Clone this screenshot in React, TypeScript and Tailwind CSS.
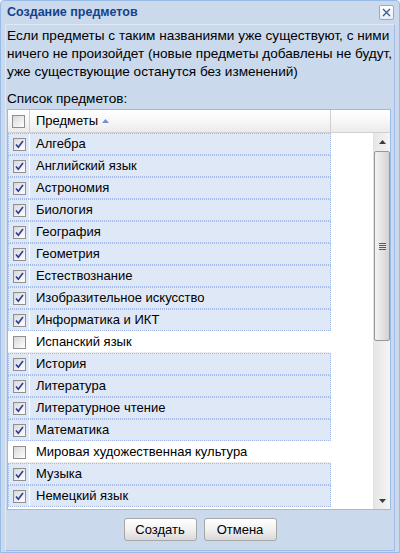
import React from "react"

const subjects: { name: string; checked: boolean }[] = [
  { name: "Алгебра", checked: true },
  { name: "Английский язык", checked: true },
  { name: "Астрономия", checked: true },
  { name: "Биология", checked: true },
  { name: "География", checked: true },
  { name: "Геометрия", checked: true },
  { name: "Естествознание", checked: true },
  { name: "Изобразительное искусство", checked: true },
  { name: "Информатика и ИКТ", checked: true },
  { name: "Испанский язык", checked: false },
  { name: "История", checked: true },
  { name: "Литература", checked: true },
  { name: "Литературное чтение", checked: true },
  { name: "Математика", checked: true },
  { name: "Мировая художественная культура", checked: false },
  { name: "Музыка", checked: true },
  { name: "Немецкий язык", checked: true },
]

const CheckBox = ({ checked }: { checked: boolean }) => (
  <div className="w-[13px] h-[13px] border border-[#8f8f8f] bg-gradient-to-br from-[#d8d8d8] to-[#ffffff] flex items-center justify-center">
    {checked && (
      <svg width="11" height="11" viewBox="0 0 11 11">
        <path d="M2 5.5 L4.3 8.2 L9 2" fill="none" stroke="#2a3c97" strokeWidth="1.6" />
      </svg>
    )}
  </div>
)

const Row = ({ name, checked }: { name: string; checked: boolean }) => (
  <div
    className={`flex h-[22px] w-[323px] ${
      checked ? "bg-[#dfe8f6] border border-dotted border-[#a3bae9]" : "bg-white border border-white border-b-[#ededed]"
    }`}
  >
    <div className="w-[21px] flex items-center justify-center border-r border-white shrink-0">
      <CheckBox checked={checked} />
    </div>
    <div className="pl-[6px] flex items-center text-[13px] text-black whitespace-nowrap">{name}</div>
  </div>
)

const ScrollBar = () => (
  <div className="w-[17px] flex flex-col bg-gradient-to-r from-[#e6e6e6] to-[#f4f4f4] border-l border-[#e2e2e2]">
    <div className="h-[17px] flex items-center justify-center">
      <svg width="7" height="4" viewBox="0 0 7 4">
        <path d="M0 4 L3.5 0 L7 4 Z" fill="#3c3c3c" />
      </svg>
    </div>
    <div className="mt-[1px] h-[190px] border border-[#979797] rounded-[2px] bg-gradient-to-r from-[#f3f3f3] via-[#e4e4e4] to-[#d2d2d2] flex items-center justify-center">
      <div className="flex flex-col gap-[1px]">
        <div className="w-[7px] h-[1px] bg-[#5b5b5b]" />
        <div className="w-[7px] h-[1px] bg-[#5b5b5b]" />
        <div className="w-[7px] h-[1px] bg-[#5b5b5b]" />
        <div className="w-[7px] h-[1px] bg-[#5b5b5b]" />
      </div>
    </div>
    <div className="flex-1" />
    <div className="h-[17px] flex items-center justify-center">
      <svg width="7" height="4" viewBox="0 0 7 4">
        <path d="M0 0 L3.5 4 L7 0 Z" fill="#3c3c3c" />
      </svg>
    </div>
  </div>
)

const Button = ({ label }: { label: string }) => (
  <button className="w-[73px] h-[23px] rounded-[3px] border border-[#a7a7a7] bg-gradient-to-b from-[#ffffff] via-[#f1f1f1] to-[#d9d9d9] text-[13px] text-black flex items-center justify-center">
    {label}
  </button>
)

export default function App() {
  return (
    <div className="w-[400px] h-[553px] bg-[#cad9ec] border border-[#99bbe8] rounded-t-[4px] flex flex-col" style={{ fontFamily: '"Liberation Sans", Arial, sans-serif' }}>
      {/* Title bar */}
      <div className="h-[23px] flex items-center justify-between pl-[6px] pr-[5px] shrink-0">
        <span className="text-[12.5px] font-bold text-[#15428b]">Создание предметов</span>
        <div className="w-[15px] h-[15px] border border-[#8daad8] rounded-[2px] bg-gradient-to-b from-white to-[#e6eefa] flex items-center justify-center">
          <svg width="9" height="9" viewBox="0 0 9 9">
            <path d="M1 1 L8 8 M8 1 L1 8" stroke="#3b5a8a" strokeWidth="1.3" />
          </svg>
        </div>
      </div>

      {/* Body */}
      <div className="mx-[4px] flex-1 border-t border-l border-[#dfe8f6] border-b border-r border-b-[#a3bae9] border-r-[#a3bae9] flex flex-col mb-[1px]">
        <p className="pl-[1px] pt-[2px] text-[13.6px] leading-[18px] text-black">
          Если предметы с таким названиями уже существуют, с ними ничего не произойдет (новые предметы добавлены не будут, уже существующие останутся без изменений)
        </p>
        <div className="mt-[8px] pl-[1px] text-[13.6px] leading-[19px] text-black">Список предметов:</div>

        {/* Grid */}
        <div className="mt-[1px] ml-[1px] w-[384px] h-[401px] border border-[#99bbe8] bg-white flex flex-col">
          <div className="h-[23px] flex border-b border-[#d0d0d0] bg-gradient-to-b from-[#ffffff] via-[#f7f7f7] to-[#ebebeb] shrink-0">
            <div className="w-[22px] border-r border-[#d0d0d0] flex items-center justify-center">
              <CheckBox checked={false} />
            </div>
            <div className="w-[301px] border-r border-[#d0d0d0] flex items-center pl-[6px] text-[13px] text-black">
              Предметы
              <svg className="ml-[4px]" width="7" height="4" viewBox="0 0 7 4">
                <path d="M0 4 L3.5 0 L7 4 Z" fill="#6f93cf" />
              </svg>
            </div>
            <div className="flex-1" />
          </div>
          <div className="flex flex-1 min-h-0">
            <div className="flex-1 flex flex-col overflow-hidden">
              {subjects.map((s) => (
                <Row key={s.name} name={s.name} checked={s.checked} />
              ))}
            </div>
            <ScrollBar />
          </div>
        </div>

        <div className="mt-[8px] flex justify-center gap-[7px]">
          <Button label="Создать" />
          <Button label="Отмена" />
        </div>
      </div>
    </div>
  )
}
